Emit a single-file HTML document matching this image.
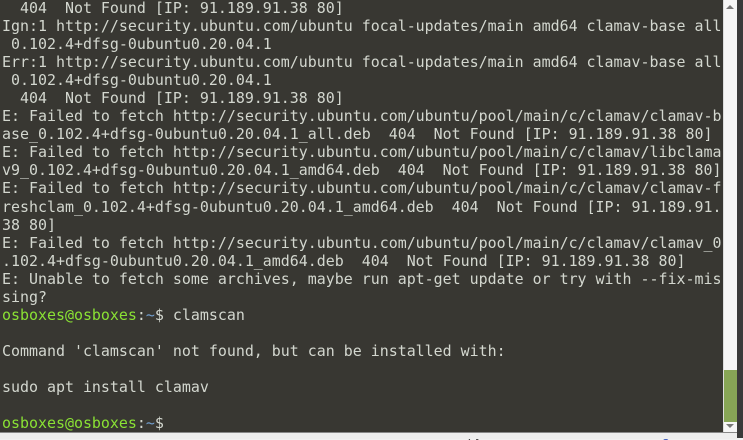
<!DOCTYPE html>
<html><head><style>
body{margin:0;width:743px;height:438px;background:#f2f2f2;position:relative;overflow:hidden}
.term{position:absolute;left:0;top:0;width:723px;height:432px;background:#383732;}
pre{margin:0;padding:0 0 0 2px;font-family:"DejaVu Sans Mono","Liberation Mono",monospace;font-size:14.95px;line-height:18.05px;color:#d3d7cf;white-space:pre;position:relative;top:-1px}
.g{color:#8ae234}.b{color:#729fcf}
.sb{position:absolute;left:723px;top:0;width:14px;height:432px;background:#f6f6f6;border-left:1px solid #ddd;box-sizing:border-box}
.th{position:absolute;left:724px;top:370px;width:13px;height:52px;background:#87a556}
.rt{position:absolute;left:737px;top:0;width:6px;height:438px;background:#3a3a3a}
.bot{position:absolute;left:0;top:432px;width:737px;height:6px;background:#eee;border-top:1px solid #888}
.t1{position:absolute;left:450px;top:424px;font:14px "Liberation Sans",sans-serif;color:#444}
.t2{position:absolute;left:592px;top:424px;font:14px "Liberation Sans",sans-serif;color:#3355bb}
.up,.dn{position:absolute;left:726px;width:0;height:0;border-left:4px solid transparent;border-right:4px solid transparent}
.up{top:5px;border-bottom:4px solid #777}.dn{top:424px;border-top:4px solid #777}
</style></head><body>
<div class="t1">Copy</div><div class="t2">Server Usage</div>
<div class="bot"></div>
<div class="term"><pre>  404  Not Found [IP: 91.189.91.38 80]
Ign:1 http://security.ubuntu.com/ubuntu focal-updates/main amd64 clamav-base all
 0.102.4+dfsg-0ubuntu0.20.04.1
Err:1 http://security.ubuntu.com/ubuntu focal-updates/main amd64 clamav-base all
 0.102.4+dfsg-0ubuntu0.20.04.1
  404  Not Found [IP: 91.189.91.38 80]
E: Failed to fetch http://security.ubuntu.com/ubuntu/pool/main/c/clamav/clamav-b
ase_0.102.4+dfsg-0ubuntu0.20.04.1_all.deb  404  Not Found [IP: 91.189.91.38 80]
E: Failed to fetch http://security.ubuntu.com/ubuntu/pool/main/c/clamav/libclama
v9_0.102.4+dfsg-0ubuntu0.20.04.1_amd64.deb  404  Not Found [IP: 91.189.91.38 80]
E: Failed to fetch http://security.ubuntu.com/ubuntu/pool/main/c/clamav/clamav-f
reshclam_0.102.4+dfsg-0ubuntu0.20.04.1_amd64.deb  404  Not Found [IP: 91.189.91.
38 80]
E: Failed to fetch http://security.ubuntu.com/ubuntu/pool/main/c/clamav/clamav_0
.102.4+dfsg-0ubuntu0.20.04.1_amd64.deb  404  Not Found [IP: 91.189.91.38 80]
E: Unable to fetch some archives, maybe run apt-get update or try with --fix-mis
sing?
<span class="g">osboxes@osboxes</span>:<span class="b">~</span>$ clamscan

Command 'clamscan' not found, but can be installed with:

sudo apt install clamav

<span class="g">osboxes@osboxes</span>:<span class="b">~</span>$ </pre></div>
<div class="sb"></div><div class="th"></div><div class="up"></div><div class="dn"></div>
<div class="rt"></div>
</body></html>
